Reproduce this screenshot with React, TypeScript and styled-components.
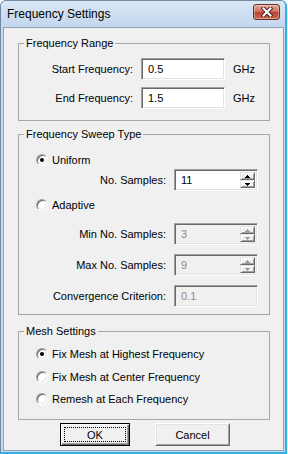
import React from 'react';
import styled, { createGlobalStyle } from 'styled-components';

const GlobalStyle = createGlobalStyle`
  html, body {
    margin: 0;
    padding: 0;
    background: #ffffff;
  }

  body {
    font-family: "Liberation Sans", Arial, sans-serif;
    font-size: 11px;
    color: #000;
  }
`;

function CloseGlyph() {
  return (
    <svg width="12" height="10" viewBox="0 0 12 10">
      <path d="M2.5 1.5 L9.5 8.5 M9.5 1.5 L2.5 8.5" stroke="#4a2620" strokeWidth="4" strokeLinecap="square" />
      <path d="M2.5 1.5 L9.5 8.5 M9.5 1.5 L2.5 8.5" stroke="#ffffff" strokeWidth="2" strokeLinecap="square" />
    </svg>
  );
}

function Arrow({ up, disabled }: { up?: boolean; disabled?: boolean }) {
  const fill = disabled ? '#a0a0a0' : '#000';
  return (
    <svg width="5" height="3" viewBox="0 0 5 3" shapeRendering="crispEdges">
      {up ? (
        <>
          <rect x="2" y="0" width="1" height="1" fill={fill} />
          <rect x="1" y="1" width="3" height="1" fill={fill} />
          <rect x="0" y="2" width="5" height="1" fill={fill} />
        </>
      ) : (
        <>
          <rect x="0" y="0" width="5" height="1" fill={fill} />
          <rect x="1" y="1" width="3" height="1" fill={fill} />
          <rect x="2" y="2" width="1" height="1" fill={fill} />
        </>
      )}
    </svg>
  );
}

type FieldProps = {
  label: string;
  value: string;
  labelWidth: number;
  mt?: number;
  unit?: string;
  spin?: boolean;
  disabled?: boolean;
};

function Field({ label, value, labelWidth, mt = 0, unit, spin, disabled }: FieldProps) {
  return (
    <FieldRow $labelW={labelWidth} $mt={mt}>
      <Label>{label}</Label>
      <TextBox $disabled={disabled}>
        <TextValue $disabled={disabled}>{value}</TextValue>
        {spin && (
          <Spin>
            <SpinButton><Arrow up disabled={disabled} /></SpinButton>
            <SpinButton><Arrow disabled={disabled} /></SpinButton>
          </Spin>
        )}
      </TextBox>
      {unit && <Unit>{unit}</Unit>}
    </FieldRow>
  );
}

function Radio({ label, checked, mt = 0 }: { label: string; checked?: boolean; mt?: number }) {
  return (
    <RadioRow $mt={mt}>
      <RadioDot $checked={checked} />
      <span>{label}</span>
    </RadioRow>
  );
}

export default function App() {
  return (
    <>
      <GlobalStyle />
      <Window>
        <TitleBar>
          <Title>Frequency Settings</Title>
          <CloseButton>
            <CloseGlyph />
          </CloseButton>
        </TitleBar>

        <Frame>
          <Content>
            <Group $mt={8} $pt={8} $pb={11}>
              <Legend>Frequency Range</Legend>
              <Field label="Start Frequency:" value="0.5" unit="GHz" labelWidth={114} />
              <Field label="End Frequency:" value="1.5" unit="GHz" labelWidth={114} mt={7} />
            </Group>

            <Group $mt={6} $pt={11} $pb={7}>
              <Legend>Frequency Sweep Type</Legend>
              <Radio label="Uniform" checked />
              <Field label="No. Samples:" value="11" labelWidth={147} mt={1} spin />
              <Radio label="Adaptive" mt={6} />
              <Field label="Min No. Samples:" value="3" labelWidth={147} mt={10} spin disabled />
              <Field label="Max No. Samples:" value="9" labelWidth={147} mt={9} spin disabled />
              <Field label="Convergence Criterion:" value="0.1" labelWidth={147} mt={9} disabled />
            </Group>

            <Group $mt={9} $pt={8} $pb={12}>
              <Legend>Mesh Settings</Legend>
              <Radio label="Fix Mesh at Highest Frequency" checked />
              <Radio label="Fix Mesh at Center Frequency" mt={7} />
              <Radio label="Remesh at Each Frequency" mt={6} />
            </Group>

            <ButtonRow>
              <DialogButton $default $w={70}>
                <FocusRect $focus>OK</FocusRect>
              </DialogButton>
              <DialogButton $w={75}>
                <FocusRect>Cancel</FocusRect>
              </DialogButton>
            </ButtonRow>
          </Content>
        </Frame>
      </Window>
    </>
  );
}

const Window = styled.div`
  display: flex;
  flex-direction: column;
  box-sizing: border-box;
  width: 287px;
  height: 454px;

  border-top: 1px solid #6f88a3;
  border-left: 1px solid #6f88a3;
  border-right: 2px solid #33b2e2;
  border-bottom: 2px solid #33b2e2;
  border-radius: 6px 6px 0 0;
  overflow: hidden;
  background: #c6d9ef;
`;

const TitleBar = styled.div`
  display: flex;
  align-items: center;
  justify-content: space-between;
  height: 26px;
  padding: 0 5px 0 6px;

  background: linear-gradient(#dae7f5, #c3d6ed);
`;

const Title = styled.span`
  font-size: 12px;
  color: #000;
`;

const CloseButton = styled.div`
  display: flex;
  align-items: center;
  justify-content: center;
  box-sizing: border-box;
  width: 27px;
  height: 16px;
  margin-top: -5px;

  border: 1px solid #6b2f28;
  border-radius: 3px;
  background: linear-gradient(#e4a89c, #cf6a58 50%, #b8402c 51%, #cc6a50);
  box-shadow: inset 0 0 0 1px rgba(255, 255, 255, 0.35);
`;

const Frame = styled.div`
  flex: 1;
  display: flex;
  padding: 0 1px 1px 2px;
`;

const Content = styled.div`
  flex: 1;
  display: flex;
  flex-direction: column;
  padding: 0 13px 0 14px;

  border: 1px solid #8fa5be;
  background: #f0f0f0;
`;

const Group = styled.fieldset<{ $mt: number; $pt: number; $pb: number }>`
  display: flex;
  flex-direction: column;
  margin: ${p => p.$mt}px 0 0;
  padding: ${p => p.$pt}px 0 ${p => p.$pb}px;
  min-width: 0;

  border: 1px solid #a7a7a7;
`;

const Legend = styled.legend`
  margin-left: 5px;
  padding: 0 2px;
  line-height: 14px;
  font-size: 11px;
`;

const FieldRow = styled.div<{ $labelW: number; $mt: number }>`
  display: grid;
  grid-template-columns: ${p => p.$labelW}px 84px auto;
  column-gap: 8px;
  align-items: center;
  height: 22px;
  margin-top: ${p => p.$mt}px;
`;

const Label = styled.span`
  text-align: right;
  white-space: nowrap;
`;

const TextBox = styled.div<{ $disabled?: boolean }>`
  display: flex;
  align-items: center;
  box-sizing: border-box;
  height: 22px;
  padding: 1px;

  border: 1px solid;
  border-color: #a0a0a0 #ffffff #ffffff #a0a0a0;
  box-shadow: inset 1px 1px 0 #696969, inset -1px -1px 0 #e3e3e3;
  background: ${p => (p.$disabled ? '#f0f0f0' : '#ffffff')};
`;

const TextValue = styled.span<{ $disabled?: boolean }>`
  flex: 1;
  padding-left: 5px;
  color: ${p => (p.$disabled ? '#8a8a8a' : '#000')};
`;

const Spin = styled.div`
  display: flex;
  flex-direction: column;
  align-self: stretch;
  width: 15px;
  margin: 1px 1px 1px 0;
`;

const SpinButton = styled.div`
  flex: 1;
  display: flex;
  align-items: center;
  justify-content: center;
  box-sizing: border-box;

  border: 1px solid;
  border-color: #e3e3e3 #696969 #696969 #e3e3e3;
  box-shadow: inset 1px 1px 0 #ffffff, inset -1px -1px 0 #a0a0a0;
  background: #f0f0f0;
`;

const Unit = styled.span`
  white-space: nowrap;
`;

const RadioRow = styled.div<{ $mt: number }>`
  display: flex;
  align-items: center;
  gap: 4px;
  height: 16px;
  margin-top: ${p => p.$mt}px;
  padding-left: 17px;
`;

const RadioDot = styled.span<{ $checked?: boolean }>`
  display: flex;
  align-items: center;
  justify-content: center;
  box-sizing: border-box;
  width: 12px;
  height: 12px;

  border: 1px solid;
  border-color: #a0a0a0 #ffffff #ffffff #a0a0a0;
  border-radius: 50%;
  box-shadow: inset 1px 1px 0 #696969, inset -1px -1px 0 #e3e3e3;
  background: #ffffff;

  &::after {
    content: '';
    width: 4px;
    height: 4px;
    border-radius: 50%;
    background: ${p => (p.$checked ? '#000' : 'transparent')};
  }
`;

const ButtonRow = styled.div`
  display: flex;
  gap: 25px;
  margin-top: 3px;
  padding-left: 42px;
`;

const DialogButton = styled.div<{ $default?: boolean; $w: number }>`
  display: flex;
  box-sizing: border-box;
  width: ${p => p.$w}px;
  height: 23px;
  padding: 3px;

  border: 1px solid;
  border-color: ${p => (p.$default ? '#000' : '#ffffff #696969 #696969 #ffffff')};
  box-shadow: ${p =>
    p.$default
      ? 'inset 1px 1px 0 #ffffff, inset -1px -1px 0 #696969, inset -2px -2px 0 #a0a0a0'
      : 'inset 1px 1px 0 #e3e3e3, inset -1px -1px 0 #a0a0a0'};
  background: #f0f0f0;
`;

const FocusRect = styled.span<{ $focus?: boolean }>`
  flex: 1;
  display: flex;
  align-items: center;
  justify-content: center;

  border: 1px dotted ${p => (p.$focus ? '#000' : 'transparent')};
`;
